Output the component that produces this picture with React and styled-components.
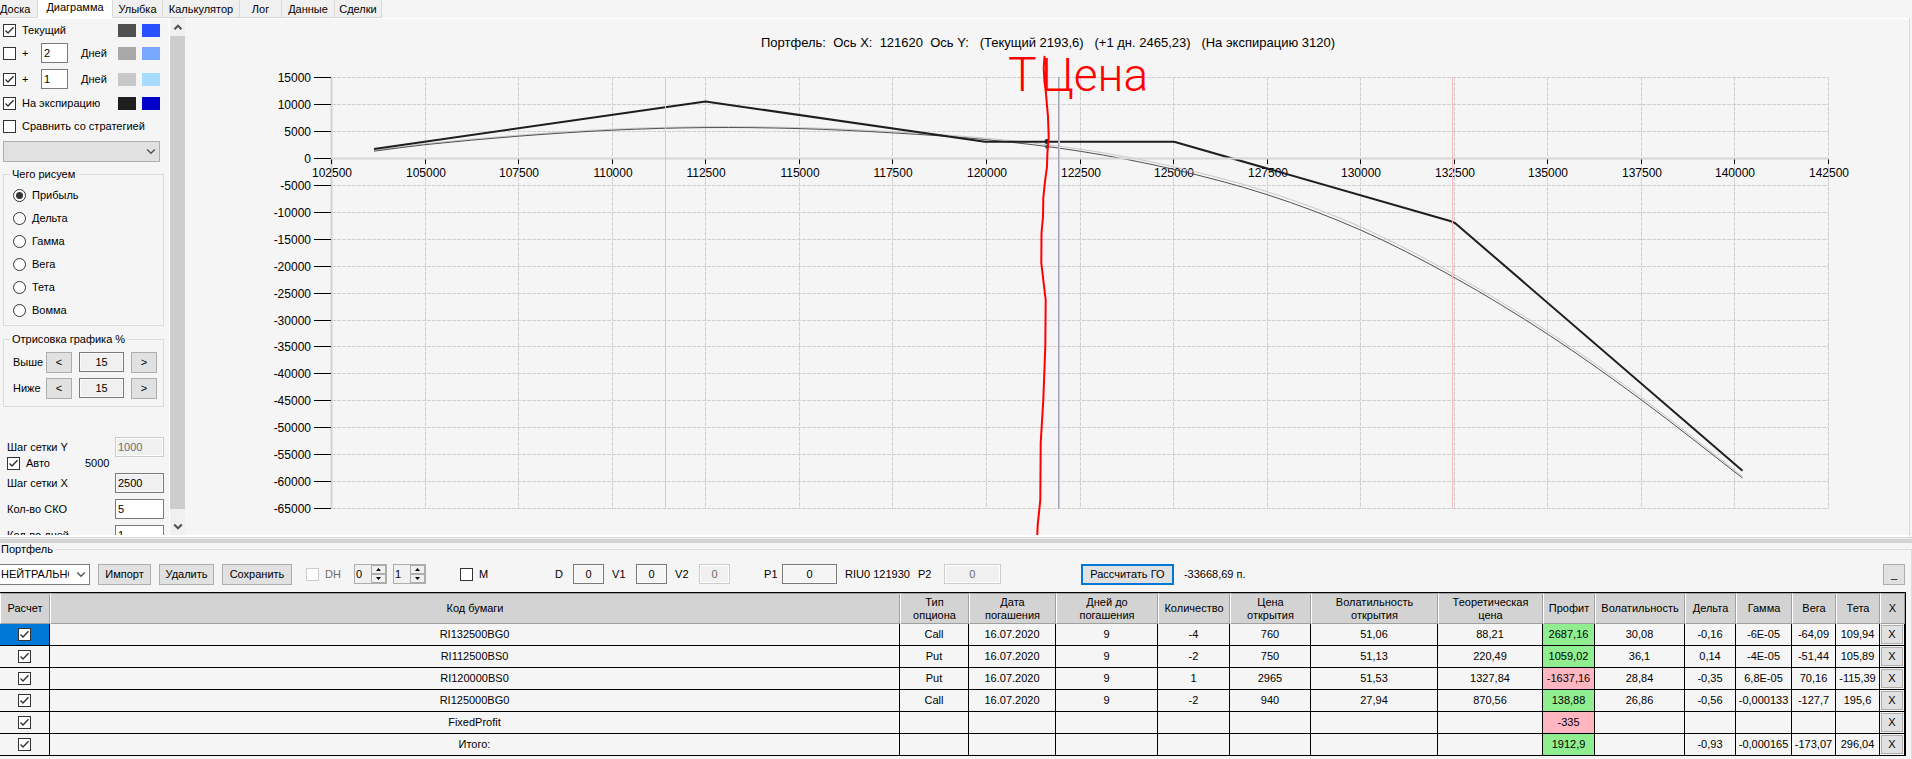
import React from "react";
import styled, { createGlobalStyle, css } from "styled-components";

const GlobalStyle = createGlobalStyle`
  *, *::before, *::after { box-sizing: border-box; }
  body {
    margin: 0;
    background: #f5f5f5;
    color: #000;
    font: 11px/13px "Liberation Sans", Arial, sans-serif;
  }
  button, input, select { font: inherit; color: inherit; margin: 0; border-radius: 0; }
`;

const Page = styled.div`
  display: flex;
  flex-direction: column;
  min-height: 100vh;
`;

/* Tabs */

const TabStrip = styled.nav`
  display: flex;
  height: 18px;
  flex: none;
`;

const Tab = styled.a`
  width: ${(p) => p.$width}px;
  height: 18px;
  padding-top: 3px;
  text-align: center;
  white-space: nowrap;
  color: #000;
  text-decoration: none;
  background: #f0f0f0;
  border-right: 1px solid #d9d9d9;
  border-bottom: 1px solid #d9d9d9;
  ${(p) => p.$first && css`text-align: left;`}
  ${(p) => p.$active && css`
    padding-top: 1px;
    background: #fff;
    border-bottom-color: #fff;
  `}
`;

/* Upper pane */

const Workspace = styled.main`
  display: flex;
  flex: none;
  height: 519px;
  margin-right: 2px;
  border-bottom: 2px solid #fff;
  border-right: 1px solid #d9d9d9;
`;

const Sidebar = styled.aside`
  width: 170px;
  flex: none;
  height: 517px;
  overflow: hidden;
  padding: 0 5px 0 3px;
  border-top: 1px solid #fff;
  border-right: 1px solid #fff;
`;

const Scrollbar = styled.div`
  width: 15px;
  flex: none;
  display: flex;
  flex-direction: column;
  background: #f0f0f0;
`;

const ScrollButton = styled.button`
  height: ${(p) => p.$height}px;
  padding: 2px 0;
  border: 0;
  background: #f0f0f0;
  display: flex;
  align-items: flex-end;
  justify-content: center;
  padding-bottom: 5px;
`;

const Thumb = styled.div`
  flex: 1;
  background: #cdcdcd;
`;

const ChartPane = styled.section`
  flex: 1;
  min-width: 0;
  border-top: 1px solid #fff;
`;

const ChartSvg = styled.svg`
  display: block;
  width: 100%;
  height: 516px;
`;

/* Controls */

const CheckBox = styled.span`
  position: relative;
  flex: none;
  display: inline-block;
  width: 13px;
  height: 13px;

  input {
    appearance: none;
    display: block;
    width: 13px;
    height: 13px;
    background: #fff;
    border: 1px solid #333;
  }
  input:disabled { border-color: #ccc; }
  svg {
    position: absolute;
    inset: 0;
    pointer-events: none;
  }
`;

const Radio = styled.input`
  appearance: none;
  flex: none;
  width: 13px;
  height: 13px;
  border: 1px solid #333;
  border-radius: 50% !important;
  background: #fff;
  display: flex;
  align-items: center;
  justify-content: center;
  &:checked::after {
    content: "";
    width: 7px;
    height: 7px;
    border-radius: 50%;
    background: #333;
  }
`;

const TextBox = styled.input`
  flex: none;
  width: ${(p) => p.$width}px;
  height: 20px;
  padding: 0 2px;
  border: 1px solid #7a7a7a;
  background: ${(p) => (p.readOnly ? "#f0f0f0" : p.$plain ? "#f5f5f5" : "#fff")};
  text-align: ${(p) => (p.$center ? "center" : "left")};
  box-shadow: inset 0 0 0 1px ${(p) => (p.$plain || p.readOnly ? "#fafafa" : "#fff")};
  &:disabled {
    color: #6d6d6d;
    border-color: #ccc;
    background: #f0f0f0;
  }
`;

const Button = styled.button`
  flex: none;
  width: ${(p) => p.$width}px;
  height: 21px;
  padding: 0;
  text-align: center;
  white-space: nowrap;
  background: #e1e1e1;
  border: 1px solid #adadad;
  ${(p) => p.$focused && css`border: 2px solid #0078d7;`}
`;

const Combo = styled.div`
  position: relative;
  flex: none;
  width: ${(p) => p.$width}px;
  height: 21px;
  margin-top: ${(p) => p.$top || 0}px;

  select {
    appearance: none;
    width: 100%;
    height: 21px;
    padding: 0 20px 0 1px;
    border: 1px solid ${(p) => (p.$grey ? "#adadad" : "#7a7a7a")};
    border-left-width: ${(p) => (p.$grey ? 1 : 0)}px;
    background: ${(p) => (p.$grey ? "#e1e1e1" : "#fff")};
    text-overflow: clip;
  }
  svg {
    position: absolute;
    right: 4px;
    top: 7px;
    pointer-events: none;
  }
`;

const OptionRow = styled.div`
  display: flex;
  align-items: center;
  height: ${(p) => p.$height}px;
  label { margin-left: 6px; white-space: nowrap; }
`;

const PlusLabel = styled.label`
  width: 19px;
`;

const DaysLabel = styled.span`
  padding-left: 13px;
`;

const Swatches = styled.span`
  display: flex;
  gap: 6px;
  margin-left: auto;
  margin-right: 4px;
`;

const Swatch = styled.span`
  width: 18px;
  height: 13px;
  background: ${(p) => p.$color};
`;

const GroupBox = styled.fieldset`
  margin: ${(p) => p.$top}px 0 0;
  min-width: 0;
  border: 1px solid #dcdcdc;
  padding: 3px 6px ${(p) => p.$bottom}px 9px;
  legend { padding: 0 2px; margin-left: -3px; white-space: nowrap; }
`;

const RadioRow = styled.label`
  display: flex;
  align-items: center;
  gap: 6px;
  height: 23px;
`;

const RangeRow = styled.div`
  display: flex;
  align-items: center;
  justify-content: space-between;
  height: 26px;
  label { width: 26px; white-space: nowrap; }
`;

const Settings = styled.div`
  display: flex;
  flex-direction: column;
  gap: 6px;
  margin-top: 30px;
  padding-left: 4px;
`;

const SettingRow = styled.div`
  display: flex;
  align-items: center;
  justify-content: space-between;
  height: 20px;
  white-space: nowrap;
`;

const AutoRow = styled.div`
  display: flex;
  align-items: center;
  height: 13px;
  margin: -6px 0 -3px;
  label { width: 59px; margin-left: 6px; }
`;

/* Lower pane */

const Splitter = styled.div`
  flex: none;
  height: 6px;
  border-top: 1px solid #d9d9d9;
  border-bottom: 4px solid #d3d3d3;
  background: #f0f0f0;
`;

const Portfolio = styled.fieldset`
  flex: 1;
  display: flex;
  flex-direction: column;
  min-width: 0;
  margin: 0;
  padding: 0;
  border: solid #dcdcdc;
  border-width: 1px 1px 0 0;
  legend { padding: 0 3px 0 1px; }
`;

const Toolbar = styled.div`
  display: flex;
  align-items: center;
  height: 36px;
  padding-right: 6px;
`;

const ToolGroup = styled.div`
  display: flex;
  align-items: center;
  flex: none;
  gap: ${(p) => p.$gap}px;
  margin-left: ${(p) => p.$lead || 0}px;
  white-space: nowrap;
  color: ${(p) => (p.$muted ? "#6d6d6d" : "#000")};
`;

const Field = styled.label`
  display: flex;
  align-items: center;
  justify-content: space-between;
  width: ${(p) => p.$width}px;
`;

const Spacer = styled.div`
  flex: 1;
`;

const Spin = styled.div`
  display: flex;
  width: 33px;
  height: 20px;
  border: 1px solid #adadad;
  background: #f0f0f0;
  input {
    flex: 1;
    width: 10px;
    min-width: 0;
    padding: 0 1px;
    border: 0;
    background: transparent;
    appearance: textfield;
  }
  input::-webkit-inner-spin-button { appearance: none; }
`;

const SpinArrows = styled.span`
  width: 15px;
  display: flex;
  flex-direction: column;
  button {
    flex: 1;
    display: flex;
    align-items: center;
    justify-content: center;
    min-height: 0;
    padding: 0;
    border: 1px solid #adadad;
    background: #f0f0f0;
  }
`;

const TableFrame = styled.div`
  flex: 1;
  margin-right: 5px;
  border-top: 1px solid #000;
  border-right: 1px solid #000;
`;

const Table = styled.table`
  width: 100%;
  table-layout: fixed;
  border-collapse: separate;
  border-spacing: 0;
  text-align: center;
`;

const HeadCell = styled.th`
  height: 31px;
  padding: 0;
  font-weight: normal;
  background: #d3d3d3;
  border: 1px solid #a0a0a0;
  border-left-color: #fff;
  white-space: pre-line;
`;

const Cell = styled.td`
  height: 22px;
  padding: 0;
  white-space: nowrap;
  border-right: 1px solid #000;
  border-bottom: 1px solid #000;
  background: ${(p) => p.$fill || "transparent"};
`;

const CheckCell = styled(Cell)`
  ${CheckBox} { display: block; margin: 0 auto; }
`;

const RemoveButton = styled.button`
  display: block;
  width: 22px;
  height: 19px;
  margin: 0 auto;
  padding: 0;
  background: #e1e1e1;
  border: 1px solid #adadad;
`;

const tabs = [
  ["Доска", 38],
  ["Диаграмма", 75],
  ["Улыбка", 50],
  ["Калькулятор", 77],
  ["Лог", 42],
  ["Данные", 53],
  ["Сделки", 47],
];

const columns = [
  ["Расчет", 50],
  ["Код бумаги", null],
  ["Тип\nопциона", 69],
  ["Дата\nпогашения", 87],
  ["Дней до\nпогашения", 102],
  ["Количество", 72],
  ["Цена\nоткрытия", 81],
  ["Волатильность\nоткрытия", 127],
  ["Теоретическая\nцена", 105],
  ["Профит", 52],
  ["Волатильность", 90],
  ["Дельта", 51],
  ["Гамма", 56],
  ["Вега", 44],
  ["Тета", 44],
  ["X", 25],
];

const rows = [
  ["RI132500BG0", "Call", "16.07.2020", "9", "-4", "760", "51,06", "88,21", "2687,16", "30,08", "-0,16", "-6E-05", "-64,09", "109,94"],
  ["RI112500BS0", "Put", "16.07.2020", "9", "-2", "750", "51,13", "220,49", "1059,02", "36,1", "0,14", "-4E-05", "-51,44", "105,89"],
  ["RI120000BS0", "Put", "16.07.2020", "9", "1", "2965", "51,53", "1327,84", "-1637,16", "28,84", "-0,35", "6,8E-05", "70,16", "-115,39"],
  ["RI125000BG0", "Call", "16.07.2020", "9", "-2", "940", "27,94", "870,56", "138,88", "26,86", "-0,56", "-0,000133", "-127,7", "195,6"],
  ["FixedProfit", "", "", "", "", "", "", "", "-335", "", "", "", "", ""],
  ["Итого:", "", "", "", "", "", "", "", "1912,9", "", "-0,93", "-0,000165", "-173,07", "296,04"],
];
const PROFIT = 8;

const profitFill = (value) => (value.startsWith("-") ? "#ffb6c1" : "#90ee90");

function Check({ mark, ...rest }) {
  return (
    <CheckBox>
      <input type="checkbox" defaultChecked={mark} {...rest} />
      {mark && (
        <svg width="13" height="13" viewBox="0 0 13 13" fill="none" stroke="#333" strokeWidth="1.4">
          <path d="M2.5 6.5 L5 9 L10.5 3.2" />
        </svg>
      )}
    </CheckBox>
  );
}

function Chevron({ up, bold }) {
  return (
    <svg width="10" height="7" viewBox="0 0 10 7" fill="none" stroke="#505050" strokeWidth={bold ? 2 : 1.3}>
      <path d={up ? "M1.5 5.2 L5 1.7 L8.5 5.2" : "M1.2 1.5 L5 5.3 L8.8 1.5"} />
    </svg>
  );
}

function Spinner({ value, label }) {
  return (
    <Spin>
      <input type="number" defaultValue={value} aria-label={label} />
      <SpinArrows>
        <button aria-label="Больше">
          <svg width="5" height="3" viewBox="0 0 5 3"><path d="M0 3 L2.5 0 L5 3 Z" /></svg>
        </button>
        <button aria-label="Меньше">
          <svg width="5" height="3" viewBox="0 0 5 3"><path d="M0 0 L2.5 3 L5 0 Z" /></svg>
        </button>
      </SpinArrows>
    </Spin>
  );
}

/* Chart scales */

const toX = (price) => 331.5 + ((price - 102500) / 2500) * 93.5625;
const toY = (profit) => 158.5 - (profit / 5000) * 26.92;
const crisp = (n) => Math.floor(n) + 0.5;
const prices = Array.from({ length: 17 }, (_, i) => 102500 + i * 2500);
const profits = Array.from({ length: 17 }, (_, i) => 15000 - i * 5000);

const expiry = "374,149 705.5,101.5 985,141.7 1173,141.7 1175,142 1451,221.3 1455,223 1742.5,470.7";
const today = [
  [374, 151.2], [425, 144.7], [518.5, 136.2], [612.5, 130.2], [705, 127.6], [799, 128.6],
  [893, 132.9], [986.6, 139.7], [1080.5, 151.3], [1173, 169.2], [1267, 194.6],
  [1360.5, 230], [1452.5, 276.5], [1548.5, 334.7], [1641.5, 400], [1742.5, 478],
];
const nextDay = [
  [374, 150.4], [425, 143.7], [518.5, 135.2], [612.5, 129.2], [705, 126.7], [799, 127.6],
  [893, 131.7], [986.6, 138.3], [1080.5, 149.2], [1173, 166.6], [1267, 191.6],
  [1360.5, 226.9], [1452.5, 273.7], [1548.5, 332], [1641.5, 397.5], [1742.5, 476.5],
];
const pen = [
  [1044.5, 56.7], [1043.7, 68.3], [1044.5, 81.7], [1045.7, 90], [1046.8, 103.3], [1048, 116.7],
  [1048.7, 137], [1047.4, 153], [1047, 166.7], [1045, 181.7], [1043.3, 198], [1043, 216.7],
  [1041.5, 233], [1041.3, 263], [1043.3, 280], [1045.7, 300], [1045.3, 346.7], [1043.3, 400],
  [1040.7, 443], [1040.3, 500], [1037.7, 525], [1037.3, 535],
];

function spline(points) {
  const at = (i) => points[Math.max(0, Math.min(points.length - 1, i))];
  const slope = (p, q) => (q[1] - p[1]) / (q[0] - p[0] || 1);
  let d = `M${at(0)}`;
  for (let i = 0; i < points.length - 1; i++) {
    const [a, b, c, e] = [at(i - 1), at(i), at(i + 1), at(i + 2)];
    const h = (c[0] - b[0]) / 3;
    d += ` C${b[0] + h},${b[1] + h * slope(a, c)} ${c[0] - h},${c[1] - h * slope(b, e)} ${c}`;
  }
  return d;
}

function Chart() {
  return (
    <ChartSvg viewBox="185 19 1724 516" role="img" aria-label="Диаграмма портфеля">
      <text x="1048" y="47" textAnchor="middle" fontSize="13">
        {"Портфель:\u00a0 Ось X:\u00a0 121620\u00a0 Ось Y:\u00a0\u00a0 (Текущий 2193,6)\u00a0\u00a0 (+1 дн. 2465,23)\u00a0\u00a0 (На экспирацию 3120)"}
      </text>

      <g stroke="#d0d0d0" strokeDasharray="4 1">
        {profits.map((v) => (
          <line key={v} x1="332" x2="1829" y1={crisp(toY(v))} y2={crisp(toY(v))} />
        ))}
        {prices.map((v) => (
          <line key={v} x1={crisp(toX(v))} x2={crisp(toX(v))} y1="77" y2="508" />
        ))}
      </g>
      <path d="M331.5 77V509" stroke="#d3d3d3" strokeWidth="2" />

      <g stroke="#000">
        {profits.map((v) => (
          <line key={v} x1="314" x2="331" y1={crisp(toY(v))} y2={crisp(toY(v))} />
        ))}
        {prices.map((v) => (
          <line key={v} x1={crisp(toX(v))} x2={crisp(toX(v))} y1="159" y2="164" />
        ))}
      </g>

      <g fontSize="12">
        {profits.map((v) => (
          <text key={v} x="311" y={Math.floor(toY(v)) + 5} textAnchor="end">{v}</text>
        ))}
        {prices.map((v) => (
          <text key={v} x={Math.floor(toX(v)) + 1} y="177" textAnchor="middle">{v}</text>
        ))}
      </g>

      <g fill="none">
        <path d={spline(nextDay)} stroke="#c8c8c8" />
        <path d={spline(today)} stroke="#505050" />
        <polyline points={expiry} stroke="#1e1e1e" strokeWidth="2" strokeLinejoin="round" />
        <path d="M331 158.5H1829" stroke="#d6d6d6" strokeWidth="2" />
        <path d="M665.5 77V508M1452.5 77V508" stroke="#ffb6c1" />
        <path d="M1058.5 77V509" stroke="#a0a8b8" />
        <path d="M1059.5 77V509" stroke="#c8cacd" />
      </g>
      <circle cx="1047" cy="141.5" r="2.5" fill="#1e1e1e" />
      <circle cx="1047" cy="146.8" r="2" fill="#505050" />

      <polyline points={pen.join(" ")} fill="none" stroke="#f00" strokeWidth="2" strokeLinejoin="round" strokeLinecap="round" />
      <g fill="#f00" fontFamily="Roboto, sans-serif" fontWeight="300">
        <text x="1008" y="91" fontSize="48">Т</text>
        <text x="1041" y="91" fontSize="46">Цена</text>
      </g>
    </ChartSvg>
  );
}

function DayOption({ id, mark, days, colors, height }) {
  return (
    <OptionRow $height={height}>
      <Check id={id} mark={mark} />
      <PlusLabel htmlFor={id}>+</PlusLabel>
      <TextBox $width={27} defaultValue={days} aria-label="Число дней" />
      <DaysLabel>Дней</DaysLabel>
      <Swatches>{colors.map((c) => <Swatch key={c} $color={c} />)}</Swatches>
    </OptionRow>
  );
}

function CurveOption({ id, mark, text, colors = [], height }) {
  return (
    <OptionRow $height={height}>
      <Check id={id} mark={mark} />
      <label htmlFor={id}>{text}</label>
      {colors.length > 0 && (
        <Swatches>{colors.map((c) => <Swatch key={c} $color={c} />)}</Swatches>
      )}
    </OptionRow>
  );
}

function Range({ id, text }) {
  return (
    <RangeRow>
      <label htmlFor={id}>{text}</label>
      <Button $width={26} aria-label={`${text} меньше`}>&lt;</Button>
      <TextBox id={id} $width={45} $center readOnly value="15" />
      <Button $width={26} aria-label={`${text} больше`}>&gt;</Button>
    </RangeRow>
  );
}

export default function App() {
  return (
    <Page>
      <GlobalStyle />
      <TabStrip>
        {tabs.map(([name, width], i) => (
          <Tab key={name} href="#" $width={width} $first={i === 0} $active={i === 1}>{name}</Tab>
        ))}
      </TabStrip>

      <Workspace>
        <Sidebar>
          <CurveOption id="cur" mark height={22} text="Текущий" colors={["#505050", "#2850ff"]} />
          <DayOption id="plus2" height={24} days="2" colors={["#a8a8a8", "#78a8ff"]} />
          <DayOption id="plus1" mark height={28} days="1" colors={["#c8c8c8", "#a8dcff"]} />
          <CurveOption id="exp" mark height={20} text="На экспирацию" colors={["#1e1e1e", "#0000c8"]} />
          <CurveOption id="cmp" height={26} text="Сравнить со стратегией" />
          <Combo $width={157} $top={2} $grey>
            <select aria-label="Стратегия"><option></option></select>
            <Chevron />
          </Combo>

          <GroupBox $top={6} $bottom={3}>
            <legend>Чего рисуем</legend>
            {["Прибыль", "Дельта", "Гамма", "Вега", "Тета", "Вомма"].map((name, i) => (
              <RadioRow key={name}>
                <Radio type="radio" name="plot" defaultChecked={i === 0} />
                {name}
              </RadioRow>
            ))}
          </GroupBox>

          <GroupBox $top={7} $bottom={5}>
            <legend>Отрисовка графика %</legend>
            <Range id="above" text="Выше" />
            <Range id="below" text="Ниже" />
          </GroupBox>

          <Settings>
            <SettingRow>
              <label htmlFor="stepY">Шаг сетки Y</label>
              <TextBox id="stepY" $width={49} disabled defaultValue="1000" />
            </SettingRow>
            <AutoRow>
              <Check id="auto" mark />
              <label htmlFor="auto">Авто</label>
              <span>5000</span>
            </AutoRow>
            <SettingRow>
              <label htmlFor="stepX">Шаг сетки X</label>
              <TextBox id="stepX" $width={49} readOnly value="2500" />
            </SettingRow>
            <SettingRow>
              <label htmlFor="sko">Кол-во СКО</label>
              <TextBox id="sko" $width={49} defaultValue="5" />
            </SettingRow>
            <SettingRow>
              <label htmlFor="days">Кол-во дней</label>
              <TextBox id="days" $width={49} defaultValue="1" />
            </SettingRow>
          </Settings>
        </Sidebar>

        <Scrollbar>
          <ScrollButton $height={18} aria-label="Вверх"><Chevron up bold /></ScrollButton>
          <Thumb />
          <ScrollButton $height={26} aria-label="Вниз"><Chevron bold /></ScrollButton>
        </Scrollbar>

        <ChartPane>
          <Chart />
        </ChartPane>
      </Workspace>

      <Splitter />

      <Portfolio>
        <legend>Портфель</legend>
        <Toolbar>
          <ToolGroup $gap={8}>
            <Combo $width={90}>
              <select aria-label="Портфель"><option>НЕЙТРАЛЬНО</option></select>
              <Chevron />
            </Combo>
            <Button $width={53}>Импорт</Button>
            <Button $width={55}>Удалить</Button>
            <Button $width={70}>Сохранить</Button>
          </ToolGroup>
          <ToolGroup $gap={6} $lead={14} $muted>
            <Check id="dh" disabled />
            <label htmlFor="dh">DH</label>
          </ToolGroup>
          <ToolGroup $gap={6} $lead={13}>
            <Spinner value={0} label="DH от" />
            <Spinner value={1} label="DH до" />
          </ToolGroup>
          <ToolGroup $gap={6} $lead={34}>
            <Check id="m" />
            <label htmlFor="m">M</label>
          </ToolGroup>
          <ToolGroup $gap={8} $lead={67}>
            <Field $width={49}>D<TextBox $width={31} $center $plain defaultValue="0" /></Field>
            <Field $width={55}>V1<TextBox $width={31} $center $plain defaultValue="0" /></Field>
            <Field $width={55}>V2<TextBox $width={31} $center disabled defaultValue="0" /></Field>
          </ToolGroup>
          <ToolGroup $gap={8} $lead={34}>
            <Field $width={73}>P1<TextBox $width={55} $center $plain defaultValue="0" /></Field>
            <span>RIU0 121930</span>
            <Field $width={83}>P2<TextBox $width={57} $center disabled defaultValue="0" /></Field>
          </ToolGroup>
          <ToolGroup $gap={10} $lead={80}>
            <Button $width={93} $focused>Рассчитать ГО</Button>
            <output>-33668,69 п.</output>
          </ToolGroup>
          <Spacer />
          <Button $width={22} aria-label="Свернуть">_</Button>
        </Toolbar>

        <TableFrame>
          <Table>
            <colgroup>
              {columns.map(([name, width], i) => <col key={i} width={width || undefined} />)}
            </colgroup>
            <thead>
              <tr>{columns.map(([name], i) => <HeadCell key={i} scope="col">{name}</HeadCell>)}</tr>
            </thead>
            <tbody>
              {rows.map((row, r) => (
                <tr key={row[0]}>
                  <CheckCell $fill={r === 0 ? "#0078d7" : undefined}>
                    <Check mark aria-label={row[0]} />
                  </CheckCell>
                  {row.map((value, c) => (
                    <Cell key={c} $fill={c === PROFIT ? profitFill(value) : undefined}>{value}</Cell>
                  ))}
                  <Cell><RemoveButton aria-label={`Удалить ${row[0]}`}>X</RemoveButton></Cell>
                </tr>
              ))}
            </tbody>
          </Table>
        </TableFrame>
      </Portfolio>
    </Page>
  );
}
